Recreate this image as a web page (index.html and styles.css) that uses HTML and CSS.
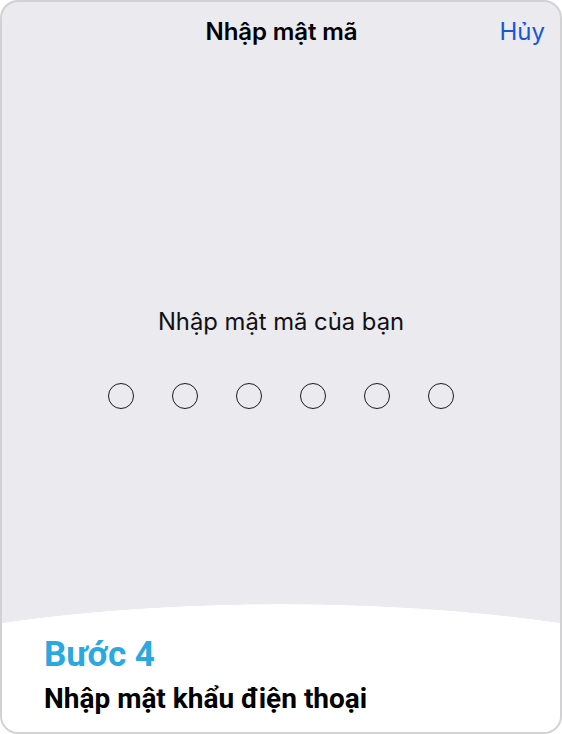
FILE: index.html
```html
<!DOCTYPE html>
<html lang="vi">
<head>
<meta charset="utf-8">
<title>Nhập mật mã</title>
<link rel="stylesheet" href="styles.css">
</head>
<body>
<div class="card">
  <header class="nav">
    <span></span>
    <h1 class="nav-title">Nhập mật mã</h1>
    <a class="nav-cancel">Hủy</a>
  </header>
  <main class="main">
    <p class="prompt">Nhập mật mã của bạn</p>
    <div class="dots">
      <span class="dot"></span>
      <span class="dot"></span>
      <span class="dot"></span>
      <span class="dot"></span>
      <span class="dot"></span>
      <span class="dot"></span>
    </div>
  </main>
  <footer class="footer">
    <div class="step">Bước 4</div>
    <div class="step-desc">Nhập mật khẩu điện thoại</div>
  </footer>
</div>
</body>
</html>
```

FILE: styles.css
```css
* { box-sizing: border-box; }
html, body { margin: 0; padding: 0; background: #ffffff; }
body { font-family: Inter, Roboto, "Noto Sans", sans-serif; }

.card {
  width: 562px;
  height: 734px;
  border: 2px solid #d2d2d4;
  border-radius: 18px;
  overflow: hidden;
  background: #ebeaef;
  display: flex;
  flex-direction: column;
}

.nav {
  height: 58px;
  display: grid;
  grid-template-columns: 1fr auto 1fr;
  align-items: center;
  padding: 0 15px 0 16px;
}
.nav-title {
  margin: 0;
  font-size: 24px;
  font-weight: 600;
  color: #000;
  letter-spacing: -0.1px;
}
.nav-cancel {
  justify-self: end;
  font-size: 24px;
  color: #1856d8;
}

.main {
  flex: 1;
  display: flex;
  flex-direction: column;
  align-items: center;
  padding-top: 248px;
}
.prompt {
  margin: 0;
  font-size: 23.8px;
  line-height: 28px;
  color: #111;
}
.dots {
  display: flex;
  gap: 38px;
  margin-top: 47px;
}
.dot {
  width: 26px;
  height: 26px;
  border: 1.6px solid #1a1a1a;
  border-radius: 50%;
}

.footer {
  height: 128px;
  background: radial-gradient(ellipse 562px 142px at 50% 142px, #ffffff 99.6%, #ebeaef 100%);
  padding: 31px 42px 0;
  font-family: Roboto, "Noto Sans", sans-serif;
}
.step {
  font-size: 35px;
  line-height: 40px;
  font-weight: 700;
  color: #2aa8e0;
}
.step-desc {
  margin-top: 8px;
  font-size: 28px;
  line-height: 32px;
  font-weight: 700;
  color: #000;
}
```
